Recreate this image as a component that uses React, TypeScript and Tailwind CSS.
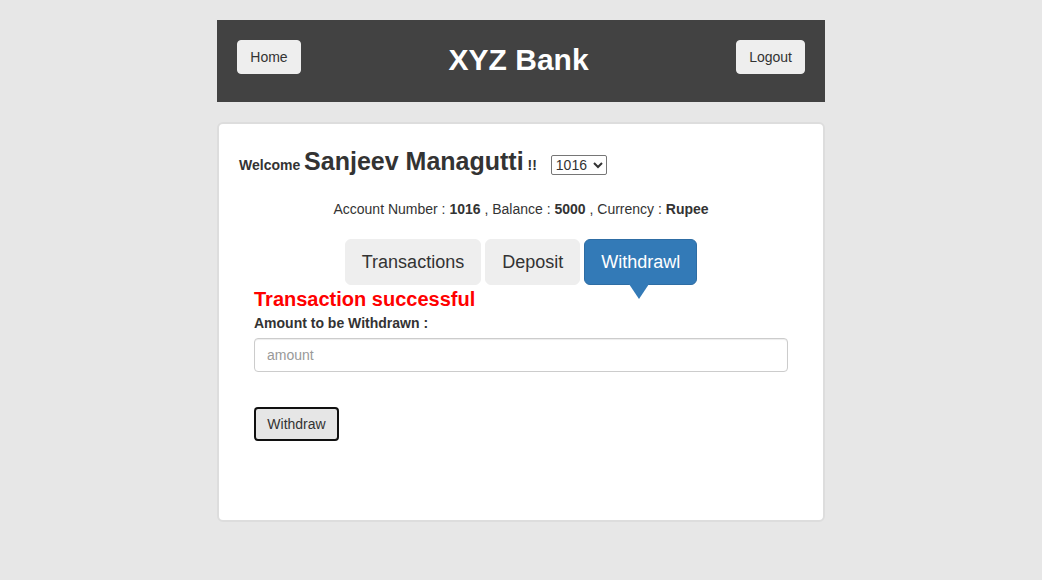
import { useState } from 'react';

const tabs = ['Transactions', 'Deposit', 'Withdrawl'];

const smallButton =
  'h-[34px] min-w-16 shrink-0 rounded border border-[#eeeeee] bg-[#eeeeee] px-3 text-sm leading-5 text-[#333333] hover:bg-[#e6e6e6]';

export default function App() {
  const [active, setActive] = useState('Withdrawl');

  return (
    <div className="min-h-screen bg-[#e7e7e7] px-4 py-5 font-['Liberation_Sans',Arial,sans-serif] text-sm leading-5 text-[#333333]">
      <div className="mx-auto flex max-w-[608px] flex-col gap-5">
        <header className="flex items-start bg-[#424242] px-5 pt-5 pb-[27px]">
          <button type="button" className={smallButton}>
            Home
          </button>
          <h1 className="flex-1 pt-[5px] text-center text-3xl leading-[30px] font-bold text-white">
            XYZ Bank
          </h1>
          <button type="button" className={smallButton}>
            Logout
          </button>
        </header>

        <main className="min-h-[400px] rounded-md border-2 border-[#dddddd] bg-white px-5 pt-[19px] pb-5">
          <div className="flex items-baseline">
            <p className="font-bold">
              Welcome <span className="text-[25px] leading-9">Sanjeev Managutti</span> !!
            </p>
            <select
              aria-label="Account"
              defaultValue="1016"
              className="ml-3.5 h-5 w-14 appearance-auto rounded-xs border border-[#767676] bg-white text-sm leading-4 text-[#333333]"
            >
              <option>1016</option>
              <option>1017</option>
              <option>1018</option>
            </select>
          </div>

          <p className="mt-5 text-center">
            Account Number : <strong>1016</strong> , Balance : <strong>5000</strong> , Currency :{' '}
            <strong>Rupee</strong>
          </p>

          <nav className="mt-5 flex justify-center gap-1">
            {tabs.map((tab) => (
              <button
                key={tab}
                type="button"
                onClick={() => setActive(tab)}
                className={
                  tab === active
                    ? 'relative h-[46px] rounded-md border border-[#2e6da4] bg-[#337ab7] px-4 text-lg leading-6 text-white'
                    : 'h-[46px] rounded-md border border-[#eeeeee] bg-[#eeeeee] px-4 text-lg leading-6 text-[#333333]'
                }
              >
                {tab}
                {tab === active && (
                  <span className="absolute top-full left-[44px] border-x-10 border-t-15 border-x-transparent border-t-[#337ab7]" />
                )}
              </button>
            ))}
          </nav>

          <div className="px-[15px]">
            <p className="pt-0.5 text-xl leading-6 font-bold text-[#ff0000]">
              Transaction successful
            </p>
            <form onSubmit={(event) => event.preventDefault()}>
              <label htmlFor="amount" className="mt-0.5 block font-bold">
                Amount to be Withdrawn :
              </label>
              <input
                id="amount"
                type="text"
                placeholder="amount"
                className="mt-[5px] block h-[34px] w-full rounded border border-[#cccccc] bg-white px-3 text-sm leading-5 text-[#555555] shadow-[inset_0_1px_1px_rgba(0,0,0,0.075)] placeholder:text-[#999999]"
              />
              <button
                type="submit"
                className="mt-[35px] h-[34px] min-w-[85px] rounded border-2 border-[#101010] bg-[#e6e6e6] px-[11px] text-sm leading-5 text-[#333333]"
              >
                Withdraw
              </button>
            </form>
          </div>
        </main>
      </div>
    </div>
  );
}
